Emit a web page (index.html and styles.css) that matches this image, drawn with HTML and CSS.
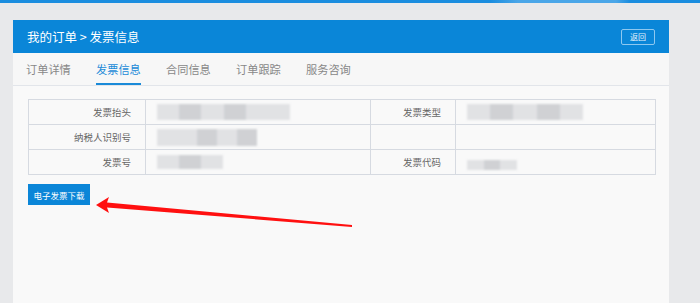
FILE: index.html
```html
<!DOCTYPE html>
<html lang="zh">
<head>
<meta charset="utf-8">
<link rel="stylesheet" href="styles.css">
</head>
<body>
<div class="topbar"></div>
<div class="panel">
  <div class="header">
    <span class="title">我的订单 &gt; 发票信息</span>
    <span class="back">返回</span>
  </div>
  <div class="tabs">
    <span class="tab">订单详情</span>
    <span class="tab active">发票信息</span>
    <span class="tab">合同信息</span>
    <span class="tab">订单跟踪</span>
    <span class="tab">服务咨询</span>
  </div>
  <div class="content">
    <table class="info">
      <colgroup><col class="c1"><col class="c2"><col class="c3"><col class="c4"></colgroup>
      <tr>
        <td class="lbl">发票抬头</td>
        <td class="val"><div class="blur b1"><i></i><i class="d"></i><i></i><i class="d"></i><i></i><i></i></div></td>
        <td class="lbl">发票类型</td>
        <td class="val"><div class="blur b4"><i></i><i class="d"></i><i></i><i class="d"></i><i></i></div></td>
      </tr>
      <tr>
        <td class="lbl">纳税人识别号</td>
        <td class="val"><div class="blur b2"><i></i><i></i><i class="d"></i><i></i><i class="d"></i></div></td>
        <td class="lbl"></td>
        <td class="val"></td>
      </tr>
      <tr>
        <td class="lbl">发票号</td>
        <td class="val"><div class="blur b3"><i></i><i class="d"></i><i></i></div></td>
        <td class="lbl">发票代码</td>
        <td class="val"><div class="blur b5"><i></i><i class="d"></i><i></i></div></td>
      </tr>
    </table>
    <span class="dl">电子发票下载</span>
  </div>
</div>
<svg class="arrow" width="700" height="303" viewBox="0 0 700 303">
  <polygon points="96,205 109,197 107,202.5 352,225 352,227 107,207.5 109,213" fill="#ff1010"/>
</svg>
</body>
</html>
```
FILE: styles.css
```css
html, body {
  margin: 0;
  padding: 0;
}
body {
  background: #e8e9eb;
  font-family: "Noto Sans CJK SC", "Noto Sans", sans-serif;
  width: 700px;
  height: 303px;
  overflow: hidden;
  position: relative;
}
.topbar {
  height: 3px;
  background: linear-gradient(90deg, #1a8ddf 0%, #1a8ddf 70%, #4aa6e8 74%, #4aa6e8 88%, #1a8ddf 90%);
}
.panel {
  margin: 17px 0 0 13px;
  width: 656px;
  height: 290px;
  background: #f9f9f9;
}
.header {
  height: 33px;
  background: #0a86d8;
  display: flex;
  align-items: center;
  justify-content: space-between;
  padding: 0 14px 0 14px;
}
.title {
  color: #ffffff;
  font-size: 12.5px;
}
.back {
  width: 32px;
  height: 14px;
  border: 1px solid #8ec8f0;
  border-radius: 2px;
  color: #e6f3fc;
  font-size: 8px;
  display: flex;
  align-items: center;
  justify-content: center;
}
.tabs {
  height: 32px;
  background: #f7f7f7;
  border-bottom: 1px solid #e2e5ea;
  display: flex;
  align-items: stretch;
  gap: 25px;
  padding-left: 13px;
}
.tab {
  width: 45px;
  font-size: 11.2px;
  color: #888888;
  display: flex;
  align-items: center;
  white-space: nowrap;
  box-sizing: border-box;
  border-bottom: 2px solid transparent;
  padding-top: 1px;
}
.tab.active {
  color: #1a8ad8;
  border-bottom-color: #1a8ad8;
}
.content {
  padding: 13px 14px 0 15px;
}
.info {
  border-collapse: collapse;
  width: 627px;
  table-layout: fixed;
}
.c1 { width: 117px; }
.c2 { width: 225px; }
.c3 { width: 85px; }
.c4 { width: 200px; }
.info td {
  border: 1px solid #d6dae1;
  height: 24px;
  padding: 0;
  font-size: 9.5px;
  color: #666666;
}
.info td.lbl {
  text-align: right;
  padding-right: 14px;
}
.info td.val {
  padding-left: 11px;
}
.blur {
  display: flex;
  height: 16px;
  filter: blur(1px);
  opacity: 0.8;
}
.blur i {
  flex: 1;
  background: #dcdde0;
}
.blur i.d {
  background: #c6c8cc;
}
.b1 { width: 133px; }
.b2 { width: 100px; height: 17px; }
.b3 { width: 66px; height: 14px; }
.b4 { width: 116px; }
.b5 { width: 50px; height: 10px; margin-top: 6px; }
.dl {
  display: inline-flex;
  align-items: center;
  justify-content: center;
  margin-top: 9px;
  width: 62px;
  height: 21px;
  background: #0b86d8;
  color: #ffffff;
  font-size: 8.5px;
}
.arrow {
  position: absolute;
  left: 0;
  top: 0;
  pointer-events: none;
}
```
